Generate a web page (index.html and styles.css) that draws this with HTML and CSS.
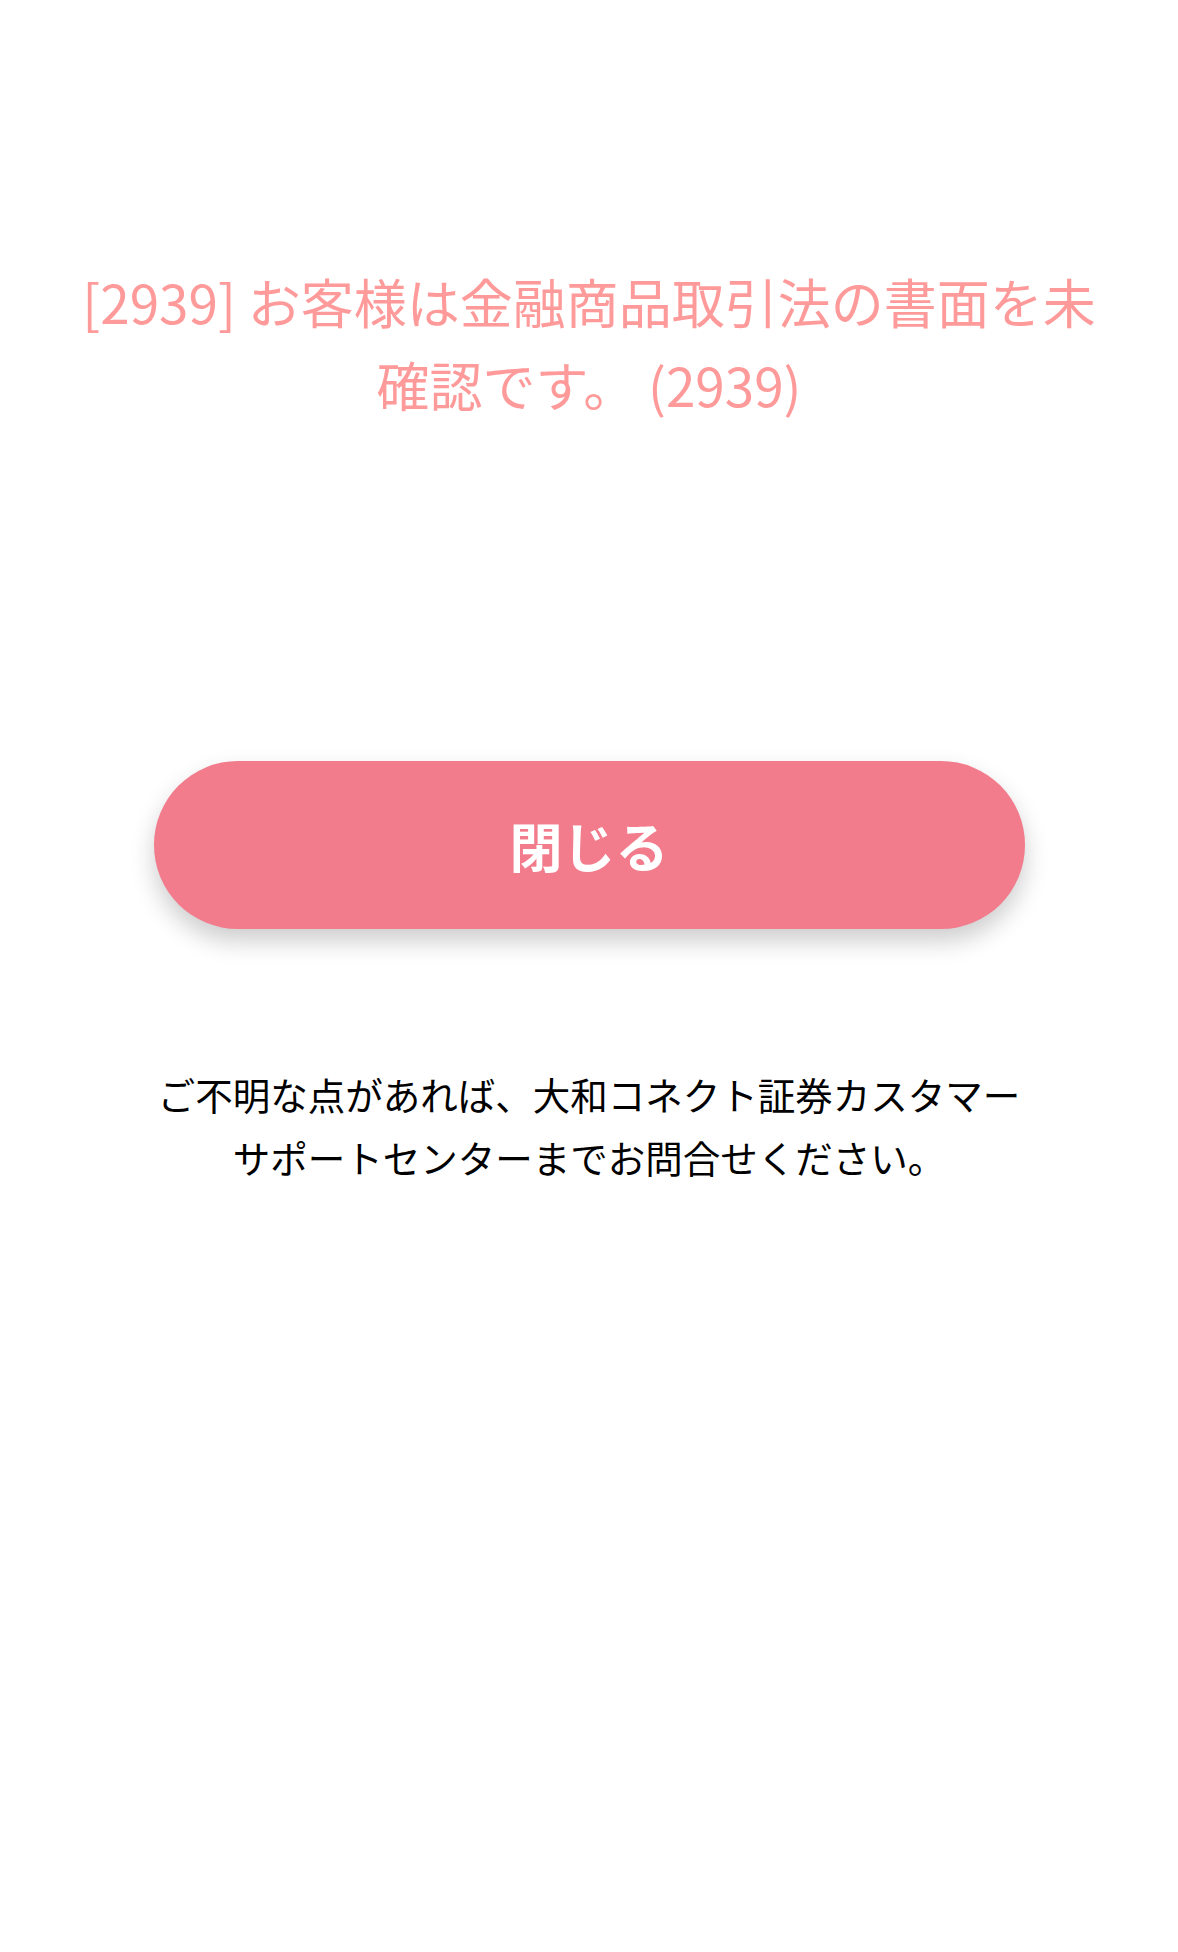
FILE: index.html
```html
<!DOCTYPE html>
<html lang="ja">
<head>
    <meta charset="UTF-8">
    <meta name="viewport" content="width=device-width, initial-scale=1.0">
    <title>エラー</title>
    <link rel="stylesheet" href="styles.css">
</head>
<body>
    <div class="error-page">
        <!-- Error message -->
        <p class="error-message">[2939] お客様は金融商品取引法の書面を未確認です。 (2939)</p>

        <!-- Close button -->
        <button class="close-button" type="button">閉じる</button>

        <!-- Contact note -->
        <p class="contact-note">ご不明な点があれば、大和コネクト証券カスタマーサポートセンターまでお問合せください。</p>
    </div>
</body>
</html>
```

FILE: styles.css
```css
body {
    font-family: "Noto Sans CJK JP", "Noto Sans", sans-serif;
    background-color: #fff;
    color: #000;
    margin: 0;
}
.error-page {
    display: flex;
    flex-direction: column;
    align-items: center;
    padding-top: 260px;
}
.error-message {
    margin: 0;
    width: 1040px;
    font-size: 53px;
    line-height: 83px;
    text-align: center;
    color: #ff9a9a;
}
.close-button {
    margin-top: 335px;
    width: 871px;
    height: 168px;
    border: none;
    border-radius: 84px;
    background-color: #f27b8c;
    color: #fff;
    font-family: inherit;
    font-size: 53px;
    font-weight: bold;
    box-shadow: 0 12px 24px rgba(0, 0, 0, 0.2);
    cursor: pointer;
}
.contact-note {
    margin: 133px 0 0;
    width: 871px;
    font-size: 37.5px;
    line-height: 63px;
    text-align: center;
}
```
